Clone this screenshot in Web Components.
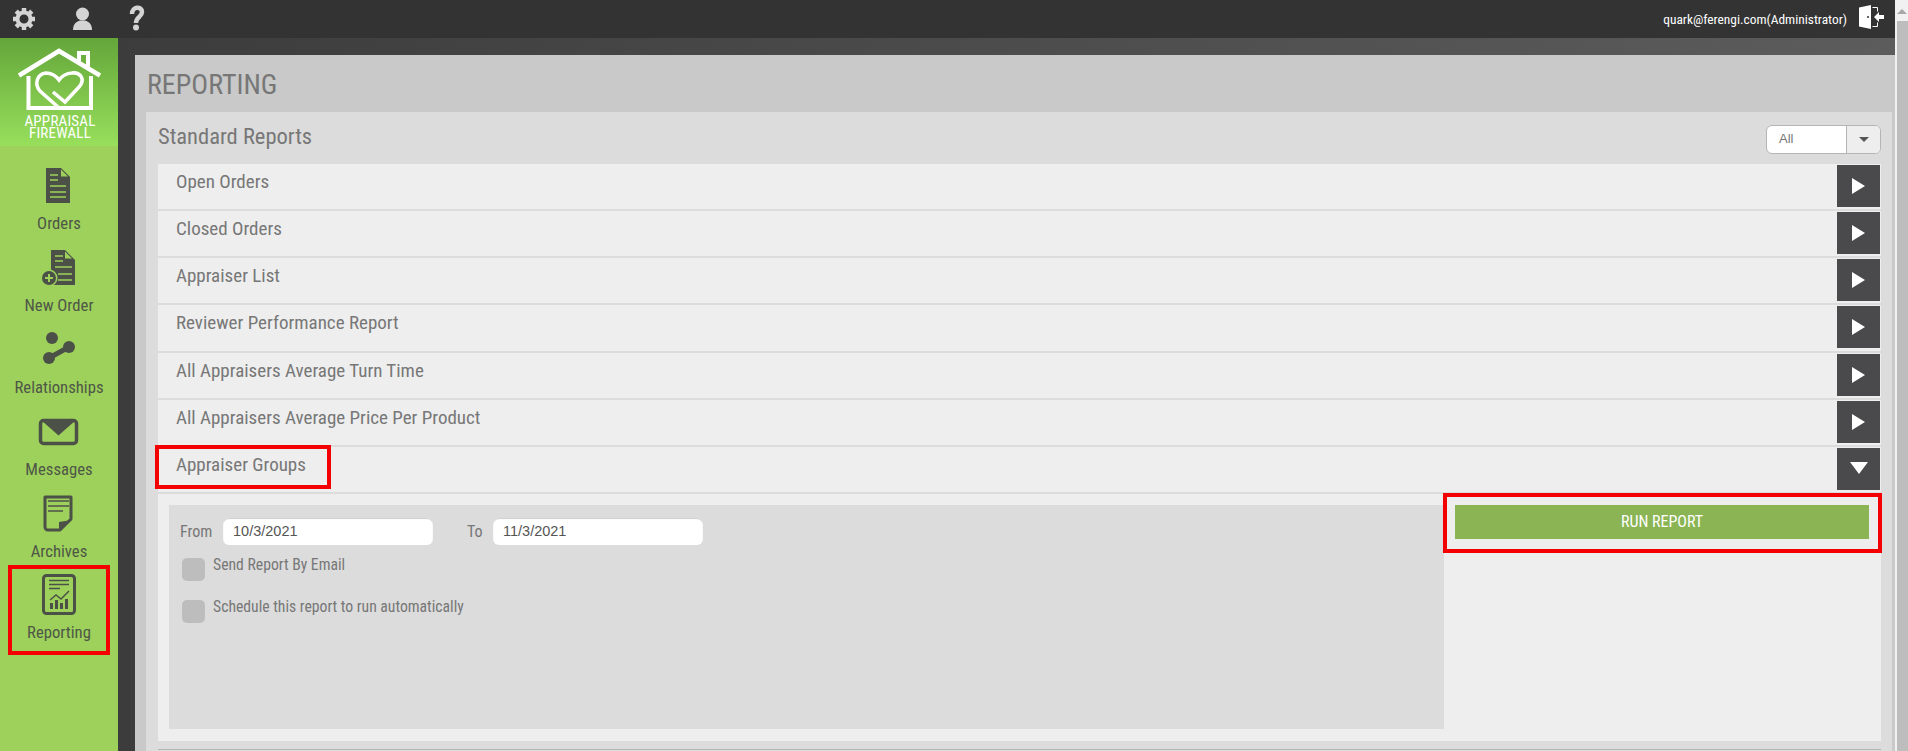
<!DOCTYPE html>
<html>
<head>
<meta charset="utf-8">
<title>Reporting</title>
<style>
html, body { margin: 0; height: 100%; overflow: hidden; background: #3d3d3d; }
body { font-family: Roboto, "Liberation Sans", sans-serif; font-stretch: 75%; }
</style>
</head>
<body>
<app-shell>
    <top-bar slot="top"></top-bar>
    <side-nav slot="side">
        <nav-item label="Orders" icon="orders"></nav-item>
        <nav-item label="New Order" icon="new"></nav-item>
        <nav-item label="Relationships" icon="rel"></nav-item>
        <nav-item label="Messages" icon="msg"></nav-item>
        <nav-item label="Archives" icon="arch"></nav-item>
        <nav-item label="Reporting" icon="rep" marked></nav-item>
    </side-nav>
    <reports-page slot="main">
        <report-row>Open Orders</report-row>
        <report-row>Closed Orders</report-row>
        <report-row>Appraiser List</report-row>
        <report-row>Reviewer Performance Report</report-row>
        <report-row>All Appraisers Average Turn Time</report-row>
        <report-row>All Appraisers Average Price Per Product</report-row>
        <report-row open marked>Appraiser Groups</report-row>
        <report-form></report-form>
    </reports-page>
</app-shell>
<script>
const ICONS = {
    orders: `<svg width="118" height="40" viewBox="0 0 118 40"><path fill="#4c5148" d="M46 2h15l9 9v26H46z"/><path fill="#9dd15b" d="M61 3.500v7h7z"/><path stroke="#9dd15b" stroke-width="1.600" d="M50 9h8M50 14h8M50 20h16M50 26h16M50 31h16" fill="none"/></svg>`,
    new: `<svg width="118" height="40" viewBox="0 0 118 40"><path fill="#4c5148" d="M51 2h14l10 10v25H51z"/><path fill="#9dd15b" d="M65 3.500v7h7z"/><path stroke="#9dd15b" stroke-width="1.600" fill="none" d="M55 8h8M55 13h8M55 19h17M58 26h14M58 32h14"/><circle cx="49" cy="30" r="8.500" fill="#9dd15b"/><circle cx="49" cy="30" r="7" fill="#4c5148"/><path stroke="#9dd15b" stroke-width="2" d="M49 26v8M45 30h8"/></svg>`,
    rel: `<svg width="118" height="40" viewBox="0 0 118 40"><g fill="#4c5148"><circle cx="52" cy="8" r="6"/><circle cx="69" cy="17" r="6"/><circle cx="49" cy="28" r="6"/></g><path stroke="#4c5148" stroke-width="5" d="M49 28 69 17"/></svg>`,
    msg: `<svg width="118" height="40" viewBox="0 0 118 40"><rect x="40.500" y="8.500" width="36" height="23" rx="3" fill="none" stroke="#4c5148" stroke-width="3.500"/><path fill="#4c5148" d="M41 8h35L58.500 23.500z"/></svg>`,
    arch: `<svg width="118" height="40" viewBox="0 0 118 40"><path fill="none" stroke="#4c5148" stroke-width="3" stroke-linejoin="round" d="M45 3h26v22L60 36H48a3 3 0 0 1-3-3z"/><path fill="#4c5148" d="M59 36V28l13-2z"/><path stroke="#4c5148" stroke-width="1.500" d="M48 7h21M48 12h21M48 17h15"/></svg>`,
    rep: `<svg width="118" height="44" viewBox="0 0 118 44"><rect x="43.500" y="3.500" width="31" height="38" rx="3" fill="none" stroke="#4c5148" stroke-width="3"/><path stroke="#4c5148" stroke-width="1.500" d="M49 8.500h20M49 12.500h20M49 16.500h11"/><path fill="#4c5148" d="M50 31h3v6h-3zM55 28h3v9h-3zM60 31h3v6h-3zM65 27h3v10h-3z"/><path fill="none" stroke="#4c5148" stroke-width="1.500" d="M50 28l6-5 5 4 8-8"/></svg>`
};

class AppShell extends HTMLElement {
    constructor() {
        super();
        this.attachShadow({mode: 'open'});
        this.shadowRoot.innerHTML = `
            <style>
                :host { display: flex; flex-direction: column; width: 1908px; height: 751px; overflow: hidden; }
                .body { display: flex; flex: 1; min-height: 0; }
                .scroll {
                    width: 13px;
                    background: #f1f1f1;
                    display: flex;
                    flex-direction: column;
                    align-items: flex-end;
                    flex: none;
                }
                .scroll i {
                    display: block;
                    width: 0;
                    height: 0;
                    margin: 9px 1px 7px 0;
                    border: 5px solid transparent;
                    border-top: 0;
                    border-bottom-color: #a8a8a8;
                }
                .scroll b { display: block; width: 11px; flex: 1; background: #bdbdbd; }
                .col { display: flex; flex-direction: column; flex: 1; min-width: 0; }
            </style>
            <div class="body">
                <div class="col">
                    <slot name="top"></slot>
                    <div class="body">
                        <slot name="side"></slot>
                        <slot name="main"></slot>
                    </div>
                </div>
                <div class="scroll"><i></i><b></b></div>
            </div>
        `;
    }
}

class TopBar extends HTMLElement {
    constructor() {
        super();
        this.attachShadow({mode: 'open'});
        this.shadowRoot.innerHTML = `
            <style>
                :host {
                    display: flex;
                    align-items: center;
                    height: 38px;
                    background: #333;
                    flex: none;
                    color: #fff;
                }
                svg { display: block; flex: none; }
                .user { margin-left: auto; font-size: 13.400px; white-space: nowrap; }
                .exit { margin: -4px 11px 0 11px; }
            </style>
            <svg width="160" height="38" viewBox="0 0 160 38">
                <g fill="none" stroke="#d4d4d4">
                    <circle cx="24" cy="19" r="6.500" stroke-width="4"/>
                    <path stroke-width="4.500" d="M24 8v4M24 26v4M13 19h4M31 19h4M16.200 11.200l2.800 2.800M29 24l2.800 2.800M16.200 26.800 19 24M29 14l2.800-2.800"/>
                </g>
                <circle cx="82.500" cy="14" r="6.500" fill="#d4d4d4"/>
                <path fill="#d4d4d4" d="M73 30c0-6 3-8 7-9.500h5c4 1.500 7 3.500 7 9.500z"/>
                <path fill="none" stroke="#d4d4d4" stroke-width="4.500" d="M132 14c0-8 10-8 10-2 0 5-6 5-6 11"/>
                <circle cx="136" cy="27.500" r="3" fill="#d4d4d4"/>
            </svg>
            <span class="user">quark@ferengi.com(Administrator)</span>
            <svg class="exit" width="26" height="26" viewBox="0 0 26 26">
                <path fill="#fff" d="M1 3.500 13 1v24L1 22.500z"/>
                <path fill="none" stroke="#fff" d="M14.500 3.500h5v4M14.500 22.500h5v-4"/>
                <path fill="#fff" d="M16 13l5-5v3h5v4h-5v3z"/>
                <circle cx="10" cy="13" r="1" fill="#333"/>
            </svg>
        `;
    }
}

class SideNav extends HTMLElement {
    constructor() {
        super();
        this.attachShadow({mode: 'open'});
        this.shadowRoot.innerHTML = `
            <style>
                :host {
                    display: block;
                    width: 118px;
                    flex: none;
                    background: #9dd15b;
                }
                .logo {
                    height: 108px;
                    background: linear-gradient(#64a63a, #98df5c);
                    box-sizing: border-box;
                    color: #fff;
                }
                .logo svg { display: block; }
                .logo div {
                    width: 80px;
                    margin: 1px 0 0 20px;
                    text-align: center;
                    font-size: 15px;
                    line-height: 12px;
                    letter-spacing: 0.200px;
                }
            </style>
            <div class="logo">
                <svg width="118" height="76" viewBox="0 38 118 76">
                    <g fill="none" stroke="#fff" stroke-width="4">
                        <path d="M19 75.500 59 51l41 24.500" stroke-width="4.500"/>
                        <path d="M28.500 76v32H91V76M79 61V53h9v16"/>
                        <path d="M53 92 65 102 79 87c7-8 1-15-7-14-6 0-11 4-13 7-3-4-8-7-13-7-9 1-12 11-6 18l18 16" stroke-width="3.500"/>
                    </g>
                </svg>
                <div>APPRAISAL FIREWALL</div>
            </div>
            <slot></slot>
        `;
    }
}

class NavItem extends HTMLElement {
    constructor() {
        super();
        this.attachShadow({mode: 'open'});
    }

    connectedCallback() {
        const marked = this.hasAttribute('marked');
        this.shadowRoot.innerHTML = `
            <style>
                :host { display: block; height: 82px; position: relative; text-align: center; color: #4f5647; font-size: 16.700px; }
                .wrap { padding-top: 20px; }
                svg { display: block; }
                .label { display: block; margin-top: 8px; line-height: 20px; }
                .mark { position: absolute; left: 8px; top: 9px; width: 94px; height: 82px; border: 4px solid #f40000; }
                :host([icon="rep"]) .wrap { padding-top: 16px; }
                :host([icon="rep"]) .label { margin-top: 7px; }
            </style>
            <div class="wrap">
                ${ICONS[this.getAttribute('icon')]}
                <span class="label">${this.getAttribute('label')}</span>
            </div>
            ${marked ? '<div class="mark"></div>' : ''}
        `;
    }
}

class ReportsPage extends HTMLElement {
    constructor() {
        super();
        this.attachShadow({mode: 'open'});
        this.shadowRoot.innerHTML = `
            <style>
                :host {
                    display: flex;
                    flex-direction: column;
                    flex: 1;
                    min-width: 0;
                    box-sizing: border-box;
                    padding: 17px 0 0 17px;
                    background: linear-gradient(90deg, #3c3c3c, #5c5c5c);
                }
                .panel {
                    flex: 1;
                    background: #c9c9c9;
                    padding-left: 11px;
                    padding-right: 3px;
                    display: flex;
                    flex-direction: column;
                }
                h1 {
                    margin: 0;
                    height: 57px;
                    box-sizing: border-box;
                    padding: 15px 0 0 1px;
                    font-size: 28px;
                    line-height: 30px;
                    font-weight: 400;
                    color: #777;
                }
                .box { flex: 1; background: #dcdcdc; padding: 0 11px 0 12px; }
                .head { display: flex; align-items: center; justify-content: space-between; height: 52px; }
                h2 { margin: -4px 0 0; font-size: 22.500px; font-weight: 400; color: #777; }
                .rows { display: flex; flex-direction: column; gap: 2px; width: 1723px; }
                .rule { height: 1px; background: #b5b5b5; margin-top: 8px; width: 1723px; }
            </style>
            <div class="panel">
                <h1>REPORTING</h1>
                <div class="box">
                    <div class="head"><h2>Standard Reports</h2><filter-select></filter-select></div>
                    <div class="rows"><slot></slot></div>
                    <div class="rule"></div>
                </div>
            </div>
        `;
    }
}

class FilterSelect extends HTMLElement {
    constructor() {
        super();
        this.attachShadow({mode: 'open'});
        this.shadowRoot.innerHTML = `
            <style>
                :host {
                    display: flex;
                    width: 115px;
                    height: 29px;
                    box-sizing: border-box;
                    border: 1px solid #b5b5b5;
                    border-radius: 6px;
                    background: #fff;
                    overflow: hidden;
                    font: 13px "Liberation Sans", sans-serif;
                    font-stretch: normal;
                    color: #777;
                    margin-top: 2px;
                }
                span { flex: 1; padding-left: 12px; line-height: 26px; }
                div { width: 33px; background: #eee; border-left: 1px solid #b5b5b5; display: flex; align-items: center; justify-content: center; }
                i { width: 0; height: 0; border: 5px solid transparent; border-top: 5px solid #555; border-bottom: 0; }
            </style>
            <span>All</span><div><i></i></div>
        `;
    }
}

class ReportRow extends HTMLElement {
    constructor() {
        super();
        this.attachShadow({mode: 'open'});
    }

    connectedCallback() {
        const open = this.hasAttribute('open');
        this.shadowRoot.innerHTML = `
            <style>
                :host {
                    display: flex;
                    height: 45.150px;
                    background: #eee;
                    position: relative;
                    align-items: flex-start;
                }
                .name { flex: 1; padding: 5px 0 0 18px; font-size: 19px; line-height: 25px; color: #777; }
                .btn {
                    width: 43px;
                    height: 42px;
                    margin: 1px 1px 0 0;
                    background: #4a4a4c;
                    display: flex;
                    align-items: center;
                    justify-content: center;
                }
                .play { width: 0; height: 0; border-left: 13px solid #fff; border-top: 8px solid transparent; border-bottom: 8px solid transparent; }
                .down { width: 0; height: 0; border-top: 12px solid #fff; border-left: 9px solid transparent; border-right: 9px solid transparent; margin-top: -2px; }
                .mark { position: absolute; left: -3px; top: -2px; width: 168px; height: 36px; border: 4px solid #f40000; }
            </style>
            <span class="name"><slot></slot></span>
            <span class="btn"><i class="${open ? 'down' : 'play'}"></i></span>
            ${this.hasAttribute('marked') ? '<div class="mark"></div>' : ''}
        `;
    }
}

class ReportForm extends HTMLElement {
    constructor() {
        super();
        this.attachShadow({mode: 'open'});
        this.shadowRoot.innerHTML = `
            <style>
                :host {
                    display: flex;
                    height: 248px;
                    background: #eee;
                    border-top: 1px solid #dcdcdc;
                    box-sizing: border-box;
                    margin-top: -1px;
                    padding: 11px 0 12px 11px;
                    color: #777;
                    position: relative;
                }
                .left { width: 1275px; background: #dcdcdc; box-sizing: border-box; padding: 13px 0 0 11px; }
                .dates { display: flex; align-items: center; font-size: 16px; }
                .dates label { width: 43px; }
                .dates .to { margin-left: 34px; width: 26px; }
                .date {
                    width: 210px;
                    height: 27px;
                    box-sizing: border-box;
                    background: #fff;
                    border-radius: 6px;
                    box-shadow: inset 0 1px 1px #ccc;
                    font: 14.500px/27px "Liberation Sans", sans-serif;
                    font-stretch: normal;
                    color: #555;
                    padding-left: 10px;
                }
                .check { display: flex; align-items: flex-start; font-size: 15.700px; margin: 0 0 19px 2px; height: 23px; }
                .checks { margin-top: 13px; }
                .check i { width: 23px; height: 23px; background: #bdbdbd; border-radius: 5px; margin-right: 8px; }
                .check span { line-height: 14px; }
                .right { flex: 1; padding-left: 11px; position: relative; }
                .run {
                    width: 414px;
                    height: 34px;
                    background: #8bb554;
                    color: #fff;
                    font-size: 16px;
                    text-align: center;
                    line-height: 34px;
                }
                .mark { position: absolute; left: -1px; top: -12px; width: 431px; height: 52px; border: 4px solid #f40000; }
            </style>
            <div class="left">
                <div class="dates">
                    <label>From</label><div class="date">10/3/2021</div>
                    <label class="to">To</label><div class="date">11/3/2021</div>
                </div>
                <div class="checks">
                    <div class="check"><i></i><span>Send Report By Email</span></div>
                    <div class="check"><i></i><span>Schedule this report to run automatically</span></div>
                </div>
            </div>
            <div class="right">
                <div class="run">RUN REPORT</div>
                <div class="mark"></div>
            </div>
        `;
    }
}

customElements.define('app-shell', AppShell);
customElements.define('top-bar', TopBar);
customElements.define('side-nav', SideNav);
customElements.define('nav-item', NavItem);
customElements.define('reports-page', ReportsPage);
customElements.define('filter-select', FilterSelect);
customElements.define('report-row', ReportRow);
customElements.define('report-form', ReportForm);
</script>
</body>
</html>
